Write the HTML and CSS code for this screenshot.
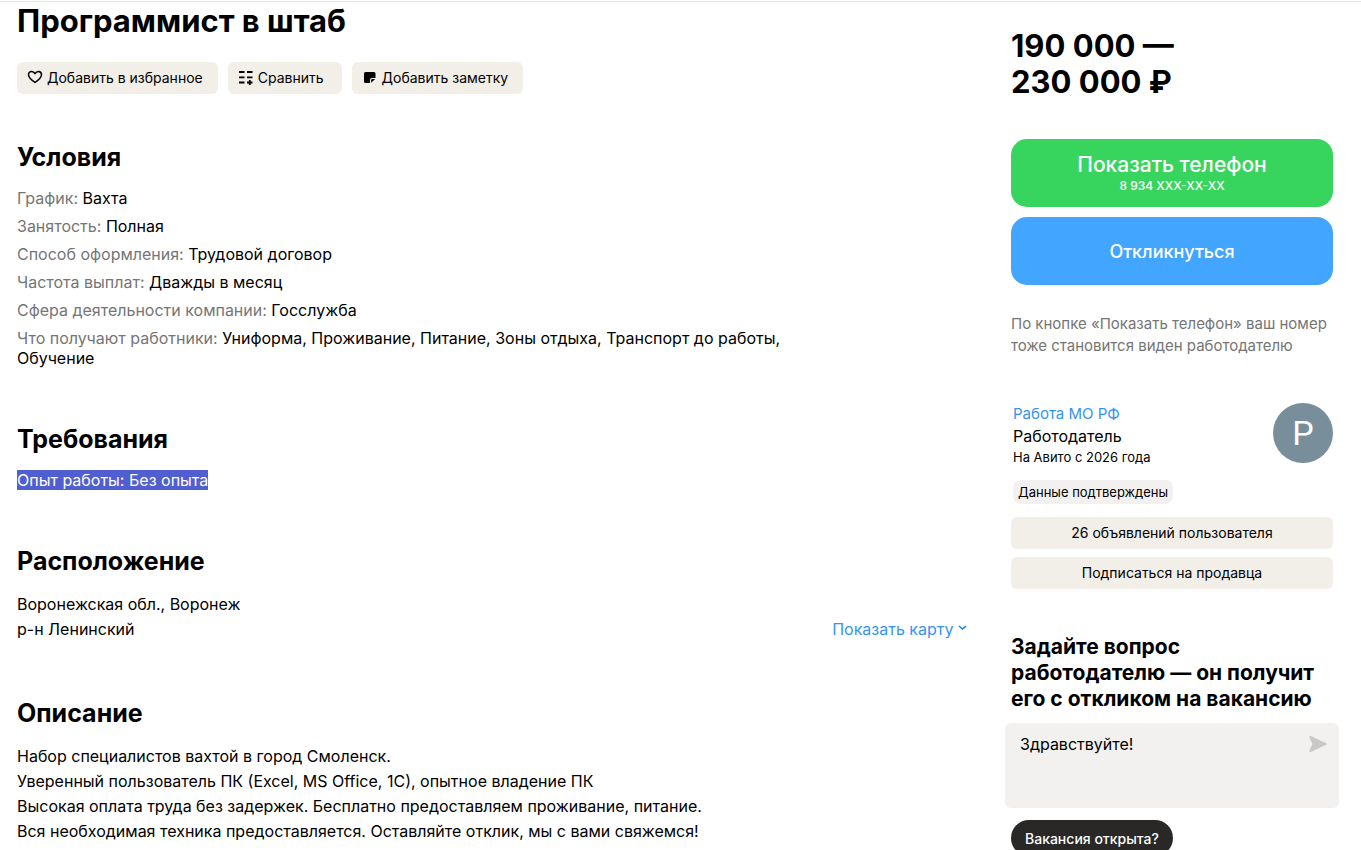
FILE: index.html
```
<!DOCTYPE html>
<html lang="ru">
  <head>
    <meta charset="UTF-8" />
    <meta name="viewport" content="width=device-width, initial-scale=1.0" />
    <title>Программист в штаб</title>

    <link rel="stylesheet" href="styles.css">
  </head>
  <body>
    <div class="page">
      <main class="content">
        <h1>Программист в штаб</h1>

        <div class="actions">
          <button class="action favorite">
            <svg width="16" height="16" viewBox="0 0 16 16" fill="none" stroke="#000" stroke-width="1.5" stroke-linejoin="round">
              <path d="M8 13.500 C4.500 11 1.500 8.700 1.500 5.700 C1.500 3.700 2.900 2.400 4.600 2.400 C6.200 2.400 7.300 3.300 8 4.600 C8.700 3.300 9.800 2.400 11.400 2.400 C13.100 2.400 14.500 3.700 14.500 5.700 C14.500 8.700 11.500 11 8 13.500 Z" />
            </svg>
            Добавить в избранное
          </button>
          <button class="action compare">
            <svg width="16" height="16" viewBox="0 0 16 16" fill="none" stroke="#000" stroke-width="1.8">
              <path d="M1 3h5.500M9 3h5.500M1 8.300h5.500M9 8.300h5.500M1 13.500h5.500M9 13.500h5.500M11.800 10.900v5.200" />
            </svg>
            Сравнить
          </button>
          <button class="action note">
            <svg width="16" height="16" viewBox="0 0 16 16">
              <path fill="#000" d="M3.500 3h8.500a1.500 1.500 0 0 1 1.500 1.500v4.500h-3.500a2 2 0 0 0-2 2v3H3.500A1.500 1.500 0 0 1 2 12.500v-8A1.500 1.500 0 0 1 3.500 3z" />
              <path fill="#000" d="M13.200 10 9.100 13.800v-2.500a1.300 1.300 0 0 1 1.300-1.300z" />
            </svg>
            Добавить заметку
          </button>
        </div>

        <section class="block">
          <h2>Условия</h2>
          <ul class="params">
            <li><span>График:</span> Вахта</li>
            <li><span>Занятость:</span> Полная</li>
            <li><span>Способ оформления:</span> Трудовой договор</li>
            <li><span>Частота выплат:</span> Дважды в месяц</li>
            <li><span>Сфера деятельности компании:</span> Госслужба</li>
            <li><span>Что получают работники:</span> Униформа, Проживание, Питание, Зоны отдыха, Транспорт до работы, Обучение</li>
          </ul>
        </section>

        <section class="block">
          <h2>Требования</h2>
          <ul class="params">
            <li><mark>Опыт работы: Без опыта</mark></li>
          </ul>
        </section>

        <section class="block">
          <h2>Расположение</h2>
          <div class="location">
            <p>Воронежская обл., Воронеж<br />р-н Ленинский</p>
            <a href="#map" class="map-link">Показать карту
              <svg width="9" height="12" viewBox="0 0 9 12" fill="none" stroke="#0b84f3" stroke-width="1.500">
                <path d="M1 3l3.500 3L8 3" />
              </svg>
            </a>
          </div>
        </section>

        <section class="block">
          <h2>Описание</h2>
          <p>Набор специалистов вахтой в город Смоленск.</p>
          <p>Уверенный пользователь ПК (Excel, MS Office, 1С), опытное владение ПК</p>
          <p>Высокая оплата труда без задержек. Бесплатно предоставляем проживание, питание.</p>
          <p>Вся необходимая техника предоставляется. Оставляйте отклик, мы с вами свяжемся!</p>
        </section>
      </main>

      <aside class="sidebar">
        <p class="price">190&nbsp;000 —<br />230&nbsp;000 ₽</p>

        <div class="contact">
          <button class="phone">Показать телефон<small>8 934 XXX-XX-XX</small></button>
          <button class="apply">Откликнуться</button>
        </div>
        <p class="hint">По кнопке «Показать телефон» ваш номер тоже становится виден работодателю</p>

        <div class="seller">
          <div class="seller-info">
            <a href="#seller">Работа МО РФ</a>
            <p class="role">Работодатель</p>
            <p class="since">На Авито с 2026 года</p>
            <span class="badge">Данные подтверждены</span>
          </div>
          <div class="avatar">Р</div>
        </div>

        <div class="seller-actions">
          <button>26 объявлений пользователя</button>
          <button>Подписаться на продавца</button>
        </div>

        <h3><label for="question">Задайте вопрос<br />работодателю — он получит<br />его с откликом на вакансию</label></h3>
        <form class="question">
          <textarea id="question">Здравствуйте!</textarea>
          <button type="button" aria-label="Отправить">
            <svg width="18" height="18" viewBox="0 0 16 16">
              <path fill="#c9c8c6" d="M1.400.900 15.300 7.300a.8.8 0 0 1 0 1.400L1.400 15.100C.7 15.400.100 15 .300 14.300L2.600 9.200Q3.200 8 2.600 6.800L.300 1.700C.100 1 .700.6 1.400.9z" />
            </svg>
          </button>
        </form>
        <button class="quick">Вакансия открыта?</button>
      </aside>
    </div>
  </body>
</html>
```
FILE: styles.css
```
* {
  box-sizing: border-box;
}
body {
  margin: 0;
  border-top: 1px solid #fff;
  font-family: Inter, Roboto, sans-serif;
  font-size: 16px;
  line-height: 25px;
  color: #000;
  background-color: #fff;
}
h1,
h2,
h3,
p,
ul {
  margin: 0;
  padding: 0;
}
button {
  padding: 0;
  border: 0;
  font-family: inherit;
  color: inherit;
  cursor: pointer;
}
a {
  color: #3494f4;
  text-decoration: none;
}
.page {
  display: grid;
  grid-template-columns: minmax(0, 1fr) 322px;
  gap: 44px;
  height: calc(100vh - 1px);
  padding: 0 28px 0 17px;
  border-top: 1px solid #eee2f1;
  overflow: hidden;
}
h1 {
  font-size: 31px;
  line-height: 38px;
}
.actions {
  display: flex;
  gap: 10px;
  margin-top: 22px;
}
.action {
  display: flex;
  align-items: center;
  gap: 4px;
  height: 32px;
  padding: 0 15px 2px 10px;
  border-radius: 6px;
  font-size: 14px;
  background-color: #f2eee8;
}
.compare {
  padding-right: 18px;
}
.actions + .block {
  margin-top: 47px;
}
.block {
  margin-top: 55px;
}
h2 {
  margin-bottom: 15px;
  font-size: 25px;
  line-height: 32px;
}
.params {
  display: flex;
  flex-direction: column;
  gap: 8px;
  max-width: 780px;
  line-height: 20px;
  list-style: none;
}
.params span {
  color: #757575;
}
mark {
  display: inline-block;
  color: #fff;
  background-color: #505ed1;
}
.location {
  display: flex;
  justify-content: space-between;
  align-items: flex-end;
}

.price {
  margin-top: 26px;
  font-size: 31px;
  font-weight: 700;
  line-height: 36px;
}
.contact {
  display: flex;
  flex-direction: column;
  gap: 10px;
  margin-top: 39px;
}
.contact button {
  height: 68px;
  border-radius: 16px;
  color: #fff;
}
.contact .phone {
  font-size: 21px;
  font-weight: 500;
  line-height: 26px;
  background-color: #37d55d;
}
.phone small {
  display: block;
  font-size: 12px;
  font-weight: 500;
  line-height: 16px;
}
.contact .apply {
  font-size: 18px;
  font-weight: 500;
  background-color: #42a5ff;
}
.hint {
  margin-top: 28px;
  font-size: 15px;
  line-height: 22px;
  color: #757575;
}
.seller {
  display: flex;
  justify-content: space-between;
  margin-top: 46px;
  padding-left: 2px;
}
.seller-info {
  line-height: 22px;
}
.seller-info a {
  display: block;
  font-size: 15px;
}
.since {
  font-size: 13px;
  line-height: 20px;
}
.badge {
  display: block;
  width: fit-content;
  margin-top: 13px;
  padding: 0 5px;
  border-radius: 8px;
  font-size: 13px;
  line-height: 24px;
  background-color: #f2f1f0;
}
.avatar {
  width: 60px;
  height: 60px;
  border-radius: 50%;
  font-family: Roboto, sans-serif;
  font-size: 34px;
  line-height: 60px;
  text-align: center;
  color: #fff;
  background-color: #798e9b;
}
.seller-actions {
  display: flex;
  flex-direction: column;
  gap: 8px;
  margin-top: 13px;
}
.seller-actions button {
  height: 32px;
  padding-bottom: 2px;
  border-radius: 6px;
  font-size: 14px;
  background-color: #f2eee8;
}
h3 {
  margin-top: 45px;
  font-size: 21px;
  line-height: 26px;
}
.question {
  display: flex;
  align-items: flex-start;
  height: 85px;
  margin: 11px -6px 12px;
  padding: 11px 12px 0 15px;
  border-radius: 6px;
  background-color: #f2f1f0;
}
.question textarea {
  flex: 1;
  min-width: 0;
  height: 64px;
  padding: 0;
  border: 0;
  outline: 0;
  font-family: inherit;
  font-size: 16px;
  line-height: 20px;
  color: #000;
  background: none;
  resize: none;
}
.question button {
  height: 20px;
  background: none;
}
.question svg {
  display: block;
}
.quick {
  height: 36px;
  padding: 0 14px;
  border-radius: 18px;
  font-size: 14px;
  font-weight: 500;
  color: #fff;
  background-color: #292826;
}
```
